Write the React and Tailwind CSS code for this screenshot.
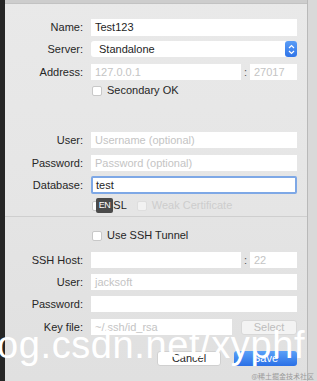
import React from 'react';

const Label = ({ children }) => (
  <div className="w-[78px] shrink-0 text-right text-[11px] leading-none text-[#262626]">{children}</div>
);

const Field = ({ value, placeholder, className = '' }) => (
  <div
    className={`h-full bg-white flex items-center px-[4px] text-[11px] leading-none ${
      value ? 'text-[#1e1e1e]' : 'text-[#c4c4c4]'
    } ${className}`}
  >
    {value || placeholder}
  </div>
);

const Check = ({ faded }) => (
  <div
    className={`w-[10px] h-[10px] rounded-[2px] border ${
      faded ? 'bg-[#f2f2f2] border-[#dedede]' : 'bg-white border-[#c8c8c8]'
    }`}
  />
);

const Row = ({ label, className, children }) => (
  <div className={`flex items-center gap-[8px] ${className}`}>
    <Label>{label}</Label>
    <div className="flex-1 h-full flex items-center">{children}</div>
  </div>
);

export default function App() {
  return (
    <div className="relative w-[317px] h-[381px] flex overflow-hidden bg-[#d6d6d6] font-['Liberation_Sans','Helvetica',sans-serif]">
      <div className="w-[5px] bg-[#262626]" />
      <div className="w-[303px] flex flex-col bg-gradient-to-b from-[#e9e9e9] to-[#e2e2e2] border-r border-[#b9b9b9]">
        <div className="h-[4px] bg-[#cdcdcd] border-b border-[#c2c2c2]" />
        <div className="flex flex-col pr-[10px] pt-[15px]">
          <Row label="Name:" className="h-[17px]">
            <Field value="Test123" className="w-full" />
          </Row>
          <Row label="Server:" className="h-[16px] mt-[5px]">
            <div className="w-full h-full flex bg-white rounded-[3px]">
              <div className="flex-1 flex items-center pl-[8px] text-[11px] leading-none text-[#1e1e1e]">Standalone</div>
              <div className="w-[12px] h-full rounded-[3px] bg-gradient-to-b from-[#5a9cf6] to-[#2f74e8] flex items-center justify-center">
                <svg width="7" height="11" viewBox="0 0 7 11" fill="none" stroke="white" strokeWidth="1.2">
                  <path d="M1 4 L3.5 1.5 L6 4" />
                  <path d="M1 7 L3.5 9.5 L6 7" />
                </svg>
              </div>
            </div>
          </Row>
          <Row label="Address:" className="h-[16px] mt-[7px]">
            <Field placeholder="127.0.0.1" className="w-[150px]" />
            <span className="w-[9px] text-center text-[11px] text-[#555]">:</span>
            <Field placeholder="27017" className="flex-1" />
          </Row>
          <div className="flex items-center h-[11px] mt-[5px] pl-[87px] gap-[5px]">
            <Check />
            <span className="text-[11px] leading-none text-[#262626]">Secondary OK</span>
          </div>

          <Row label="User:" className="h-[16px] mt-[36px]">
            <Field placeholder="Username (optional)" className="w-full" />
          </Row>
          <Row label="Password:" className="h-[16px] mt-[7px]">
            <Field placeholder="Password (optional)" className="w-full" />
          </Row>
          <Row label="Database:" className="h-[18px] mt-[5px]">
            <div className="w-full h-full bg-white border-2 border-[#7ea8e6] rounded-[2px] flex items-center px-[3px] text-[11px] leading-none text-[#1e1e1e]">
              test
            </div>
          </Row>
          <div className="flex items-center h-[13px] mt-[5px] pl-[87px]">
            <div className="relative flex items-center gap-[4px]">
              <Check />
              <span className="text-[11px] leading-none text-[#262626]">SSL</span>
              <div className="absolute left-[4px] top-[-2px] w-[17px] h-[15px] rounded-[2px] bg-[#4a4a4a] flex items-center justify-center text-[9px] text-white tracking-[-0.5px]">
                EN
              </div>
            </div>
            <div className="flex items-center gap-[5px] ml-[10px]">
              <Check faded />
              <span className="text-[11px] leading-none text-[#cdcdcd]">Weak Certificate</span>
            </div>
          </div>
        </div>

        <div className="mt-[4px] border-t border-[#cfcfcf] flex flex-col pr-[10px] bg-gradient-to-b from-[#e4e4e4] to-[#e0e0e0] flex-1">
          <div className="flex items-center h-[11px] mt-[13px] pl-[87px] gap-[5px]">
            <Check />
            <span className="text-[11px] leading-none text-[#262626]">Use SSH Tunnel</span>
          </div>
          <Row label="SSH Host:" className="h-[16px] mt-[11px]">
            <Field className="w-[150px]" />
            <span className="w-[9px] text-center text-[11px] text-[#555]">:</span>
            <Field placeholder="22" className="flex-1" />
          </Row>
          <Row label="User:" className="h-[16px] mt-[6px]">
            <Field placeholder="jacksoft" className="w-full" />
          </Row>
          <Row label="Password:" className="h-[16px] mt-[6px]">
            <Field className="w-full" />
          </Row>
          <Row label="Key file:" className="h-[16px] mt-[7px]">
            <Field placeholder="~/.ssh/id_rsa" className="w-[141px]" />
            <div className="ml-[9px] flex-1 h-[15px] rounded-[3px] bg-[#f3f3f3] border border-[#d8d8d8] flex items-center justify-center text-[11px] text-[#bdbdbd]">
              Select
            </div>
          </Row>
          <div className="flex justify-end gap-[13px] mt-[16px]">
            <div className="w-[64px] h-[15px] rounded-[3px] bg-white border border-[#d0d0d0] flex items-center justify-center text-[11px] text-[#262626]">
              Cancel
            </div>
            <div className="w-[63px] h-[15px] rounded-[3px] bg-gradient-to-b from-[#5aa0f7] to-[#2a6fe6] flex items-center justify-center text-[11px] text-white">
              Save
            </div>
          </div>
        </div>
      </div>
      <div className="flex-1 bg-[#d9d9d9]" />

      {/* watermark overlay */}
      <div className="absolute left-[-3px] top-[326px] text-[38px] leading-none text-white tracking-[0.6px] whitespace-nowrap font-['Liberation_Sans',sans-serif] pointer-events-none">
        og.csdn.net/xyphf
      </div>
      <div className="absolute right-[3px] bottom-[1px] text-[7px] leading-none text-[#9a9a9a] font-['Noto_Sans_CJK_SC',sans-serif]">
        @稀土掘金技术社区
      </div>
    </div>
  );
}
